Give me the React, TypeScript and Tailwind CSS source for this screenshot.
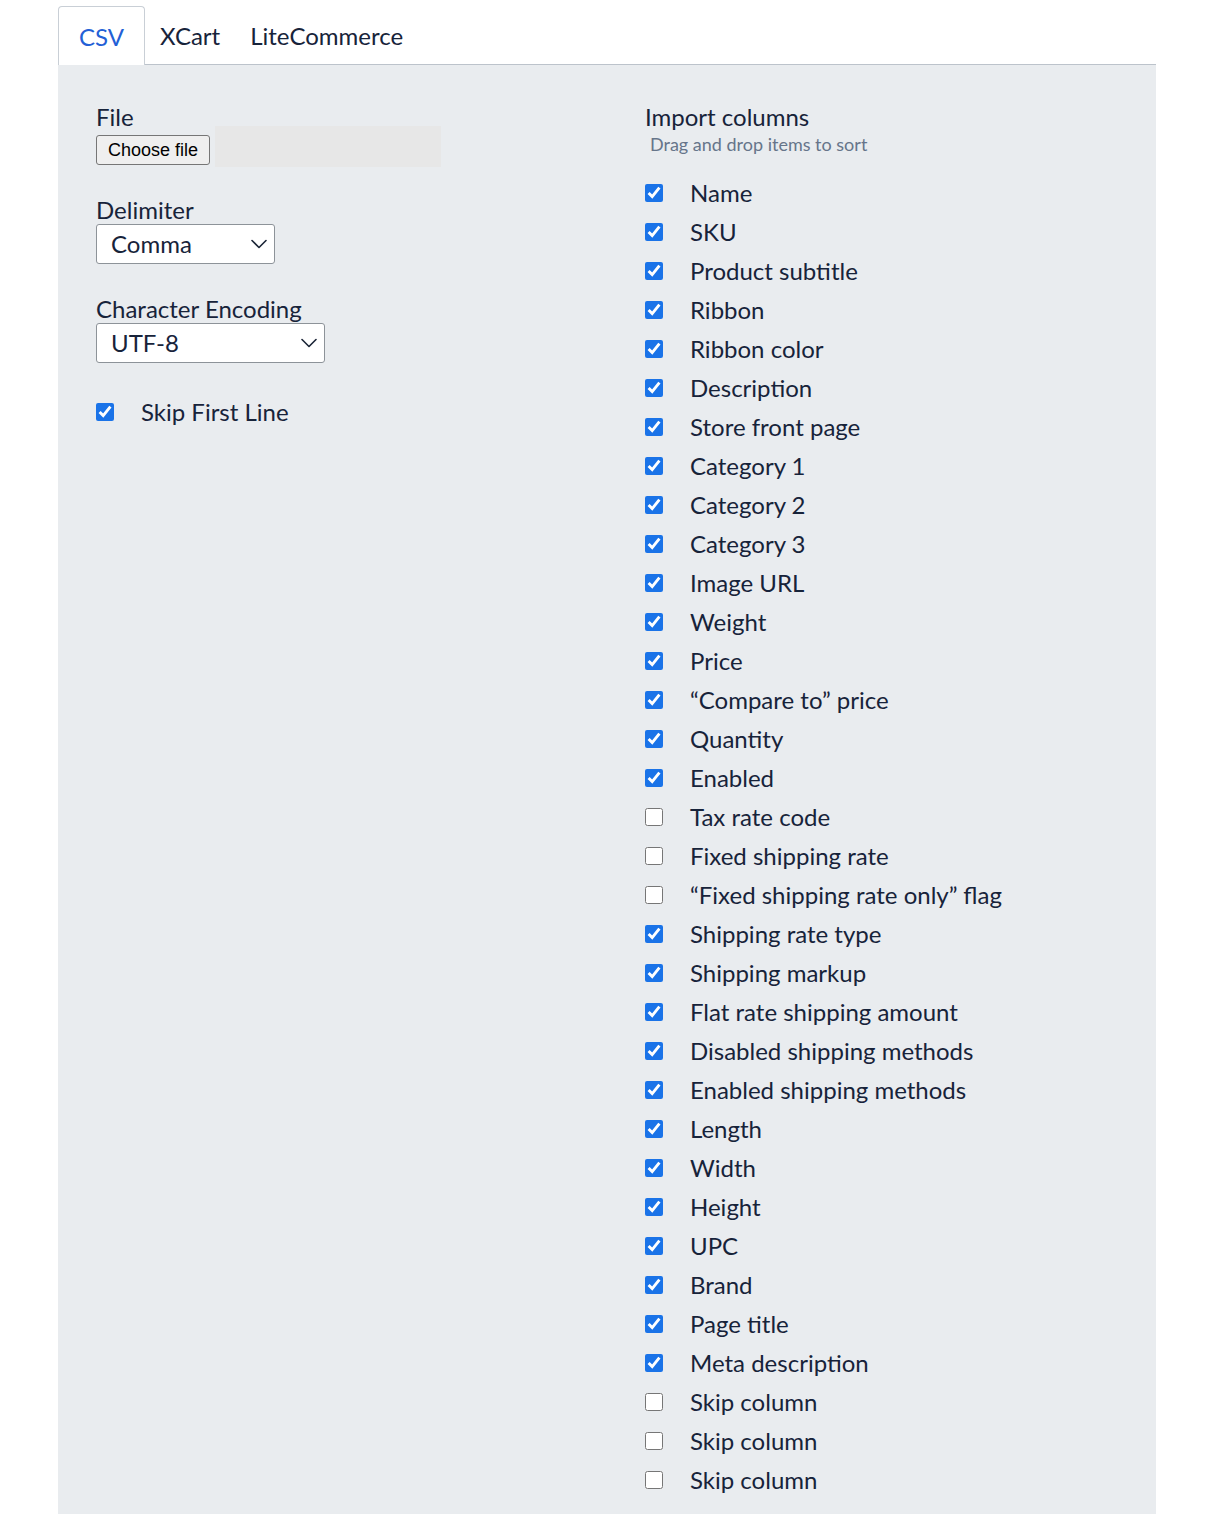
import { useState } from "react";

const columns: { label: string; checked: boolean }[] = [
  { label: "Name", checked: true },
  { label: "SKU", checked: true },
  { label: "Product subtitle", checked: true },
  { label: "Ribbon", checked: true },
  { label: "Ribbon color", checked: true },
  { label: "Description", checked: true },
  { label: "Store front page", checked: true },
  { label: "Category 1", checked: true },
  { label: "Category 2", checked: true },
  { label: "Category 3", checked: true },
  { label: "Image URL", checked: true },
  { label: "Weight", checked: true },
  { label: "Price", checked: true },
  { label: "\u201CCompare to\u201D price", checked: true },
  { label: "Quantity", checked: true },
  { label: "Enabled", checked: true },
  { label: "Tax rate code", checked: false },
  { label: "Fixed shipping rate", checked: false },
  { label: "\u201CFixed shipping rate only\u201D flag", checked: false },
  { label: "Shipping rate type", checked: true },
  { label: "Shipping markup", checked: true },
  { label: "Flat rate shipping amount", checked: true },
  { label: "Disabled shipping methods", checked: true },
  { label: "Enabled shipping methods", checked: true },
  { label: "Length", checked: true },
  { label: "Width", checked: true },
  { label: "Height", checked: true },
  { label: "UPC", checked: true },
  { label: "Brand", checked: true },
  { label: "Page title", checked: true },
  { label: "Meta description", checked: true },
  { label: "Skip column", checked: false },
  { label: "Skip column", checked: false },
  { label: "Skip column", checked: false },
];

const tabs = ["CSV", "XCart", "LiteCommerce"];

function Chevron() {
  return (
    <svg width="16" height="10" viewBox="0 0 16 10" fill="none" className="pointer-events-none absolute right-[8px] top-1/2 -translate-y-1/2">
      <path d="M1 1.5 L8 8.5 L15 1.5" stroke="#1b2537" strokeWidth="1.6" strokeLinecap="round" strokeLinejoin="round" />
    </svg>
  );
}

function Select({ value, options, width }: { value: string; options: string[]; width: string }) {
  return (
    <div className={`relative mt-[2px] h-[40px] ${width}`}>
      <select
        defaultValue={value}
        className="h-full w-full appearance-none rounded-[3px] border border-[#8d9399] bg-white pl-[14px] text-[24px] text-[#17233a] outline-none"
      >
        {options.map((o) => (
          <option key={o}>{o}</option>
        ))}
      </select>
      <Chevron />
    </div>
  );
}

function Checkbox({ checked }: { checked: boolean }) {
  return (
    <input
      type="checkbox"
      defaultChecked={checked}
      className="m-0 h-[18px] w-[18px] shrink-0 accent-[#1a73e8]"
    />
  );
}

export default function App() {
  const [active, setActive] = useState(0);

  return (
    <div className="min-h-screen bg-white pt-[6px] font-['Lato',sans-serif] text-[#17233a]">
      <div className="ml-[58px] w-[1098px]">
        {/* Tabs */}
        <div className="flex h-[58px] items-stretch">
          {tabs.map((t, i) => (
            <button
              key={t}
              onClick={() => setActive(i)}
              className={
                i === active
                  ? "relative z-10 -mb-px rounded-t-[4px] border border-b-0 border-[#c9cfd6] bg-white px-[20px] pt-[2px] text-[24px] leading-none text-[#2360d6]"
                  : "border-b border-transparent px-[15px] pt-[2px] text-[24px] leading-none text-[#17233a]"
              }
            >
              {t}
            </button>
          ))}
        </div>

        {/* Panel */}
        <div className="grid grid-cols-2 gap-[76px] border-t border-[#bcc3cb] bg-[#e9ecef] px-[38px] pb-[38px] pt-[40px]">
          {/* Left column */}
          <div className="flex flex-col items-start">
            <label className="text-[24px] leading-[24px]">File</label>
            <div className="flex items-start">
              <button className="mt-[6px] h-[30px] rounded-[3px] border border-[#767676] bg-[#efefef] px-[11px] font-['Liberation_Sans',Arial,sans-serif] text-[18px] leading-none text-black">
                Choose file
              </button>
              <div className="-mt-[3px] ml-[5px] h-[41px] w-[226px] bg-[#e7e7e7]" />
            </div>

            <label className="mt-[31px] text-[24px] leading-[24px]">Delimiter</label>
            <Select value="Comma" options={["Comma", "Semicolon", "Tab"]} width="w-[179px]" />

            <label className="mt-[33px] text-[24px] leading-[24px]">Character Encoding</label>
            <Select value="UTF-8" options={["UTF-8", "ISO-8859-1", "Windows-1252"]} width="w-[229px]" />

            <div className="mt-[40px] flex h-[18px] items-center gap-[27px]">
              <Checkbox checked />
              <span className="text-[24px] leading-none">Skip First Line</span>
            </div>
          </div>

          {/* Right column */}
          <div className="flex flex-col">
            <h3 className="text-[24px] leading-[24px]">Import columns</h3>
            <p className="ml-[5px] mt-[5px] text-[18px] leading-[20px] text-[#66758a]">Drag and drop items to sort</p>
            <ul className="mt-[19px] flex flex-col">
              {columns.map((c, i) => (
                <li key={i} className="flex h-[39px] items-center gap-[27px]">
                  <Checkbox checked={c.checked} />
                  <span className="text-[24px] leading-none">{c.label}</span>
                </li>
              ))}
            </ul>
          </div>
        </div>
      </div>
    </div>
  );
}
